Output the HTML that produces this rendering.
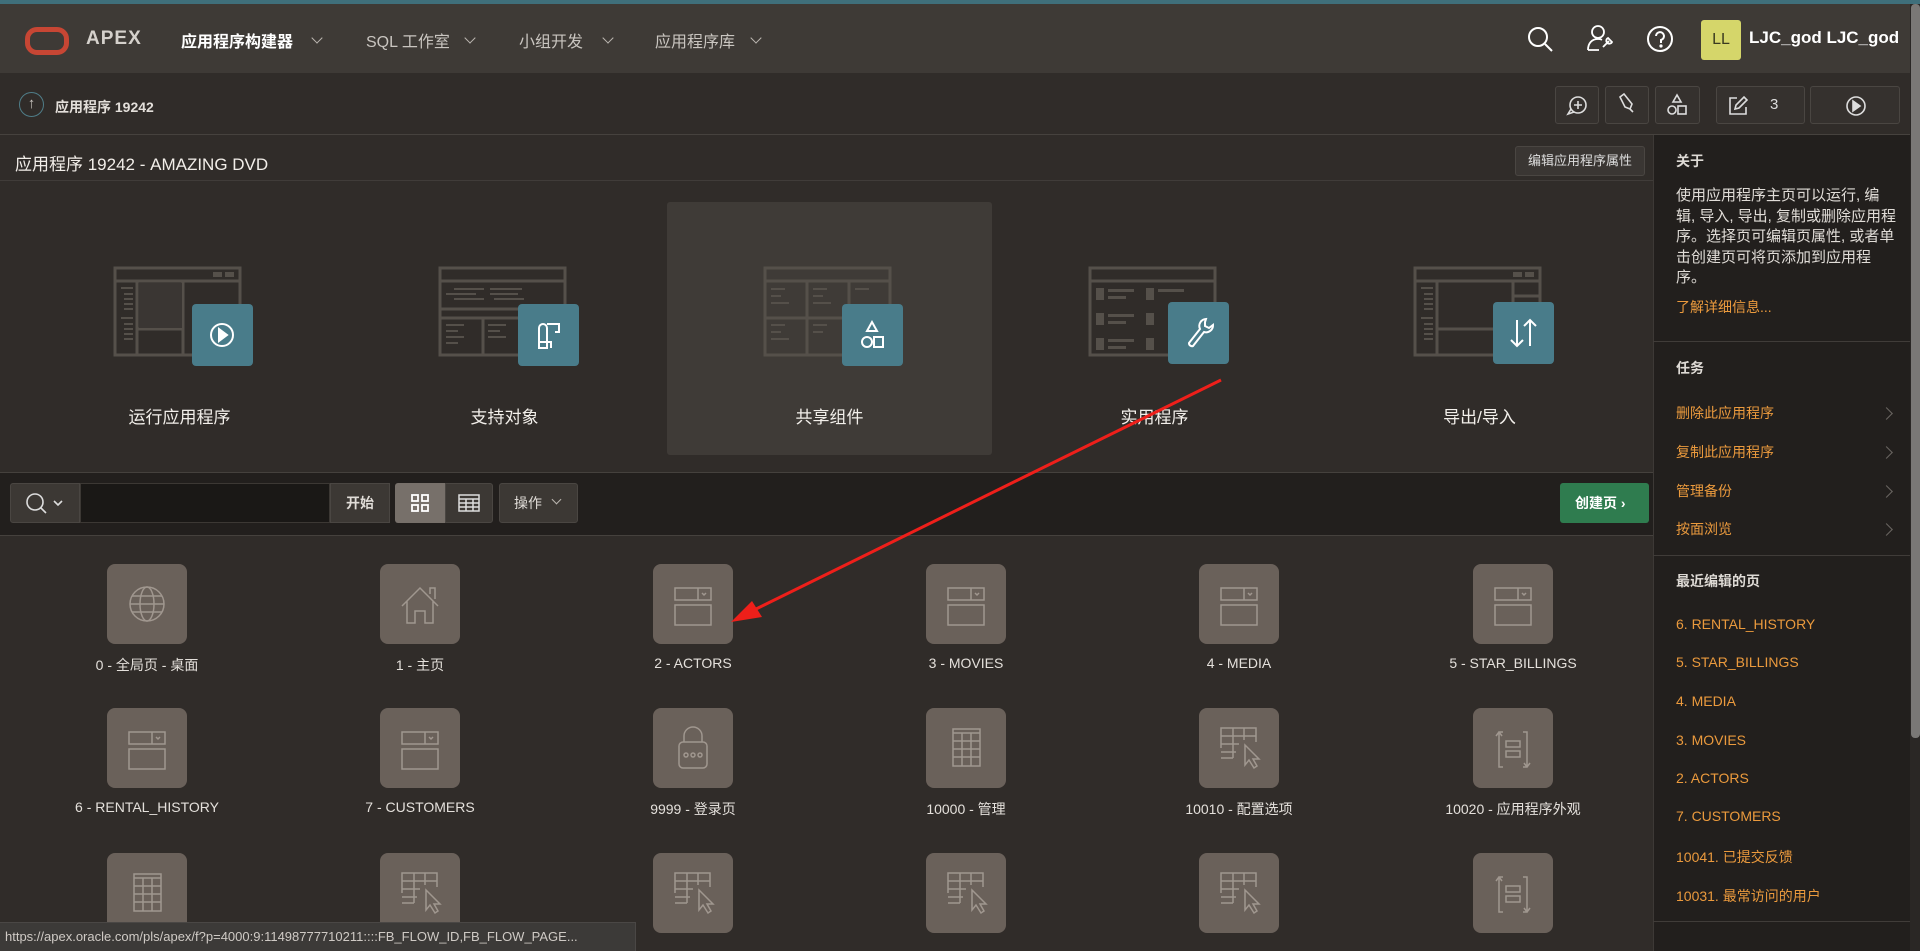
<!DOCTYPE html>
<html><head><meta charset="utf-8">
<style>
*{margin:0;padding:0;box-sizing:border-box}
body{width:1920px;height:951px;overflow:hidden;background:#302c29;font-family:"Liberation Sans","Noto Sans CJK SC",sans-serif;color:#e6e3df;position:relative}
.a{position:absolute}
.nav{font-size:16px;color:#c9c5c0;top:28px}
.chev{position:absolute;width:8px;height:8px;border-right:1.5px solid #bbb6b0;border-bottom:1.5px solid #bbb6b0;transform:rotate(45deg)}
.tb{position:absolute;top:86px;height:38px;border:1px solid #4a4642;border-radius:3px;background:#35312e}
.card{position:absolute;top:202px;width:325px;height:253px}
.card .lbl{position:absolute;top:201px;left:0;width:100%;text-align:center;font-size:17px;color:#f2efea}
.mock{position:absolute;left:-67px;top:64px}
.badge{position:absolute;left:12px;top:102px;width:61px;height:62px;background:#497c8a;border-radius:4px}
.tile{position:absolute;width:80px;height:80px;background:#6a615a;border-radius:8px}
.tl{position:absolute;width:260px;text-align:center;font-size:14px;color:#e4e0db}
.rp{position:absolute;left:1676px;font-size:14px}
.or{color:#eb9a3d}
.h{font-weight:bold;color:#dedad5;font-size:14px}
.rc{position:absolute;left:1882px;width:9px;height:9px;border-right:1.5px solid #6b6662;border-top:1.5px solid #6b6662;transform:rotate(45deg)}
</style></head><body>
<div class="a" style="left:0;top:0;width:1920px;height:4px;background:#3f6f7b"></div>
<div class="a" style="left:0;top:4px;width:1910px;height:69px;background:#3e3a36"></div>
<div class="a" style="left:25px;top:27px;width:44px;height:28px;border:5px solid #c74634;border-radius:12px"></div>
<div class="a" style="left:86px;top:28px;font-size:19px;font-weight:bold;color:#d5d1cc;letter-spacing:1px">APEX</div>
<div class="a nav" style="left:181px;color:#fff;font-weight:bold">应用程序构建器</div><div class="chev" style="left:313px;top:34px"></div>
<div class="a nav" style="left:366px">SQL 工作室</div><div class="chev" style="left:466px;top:34px"></div>
<div class="a nav" style="left:519px">小组开发</div><div class="chev" style="left:604px;top:34px"></div>
<div class="a nav" style="left:655px">应用程序库</div><div class="chev" style="left:752px;top:34px"></div>
<svg class="a" style="left:1526px;top:25px" width="30" height="30" viewBox="0 0 30 30" fill="none" stroke="#fff" stroke-width="2"><circle cx="12" cy="12" r="9"/><path d="M19 19l7 7"/></svg>
<svg class="a" style="left:1586px;top:23px" width="30" height="32" viewBox="0 0 30 32" fill="none" stroke="#fff" stroke-width="1.8"><circle cx="12" cy="9" r="6"/><path d="M2 27c0-7 4-11 10-11c2 0 3 .3 4 .8M2 27h11"/><path d="M17 24l6-6M22 15a3 3 0 1 0 4 4l-2-2z"/></svg>
<svg class="a" style="left:1646px;top:25px" width="28" height="28" viewBox="0 0 28 28" fill="none" stroke="#fff" stroke-width="2"><circle cx="14" cy="14" r="12"/><path d="M10 11a4 4 0 1 1 5 4v3"/><circle cx="15" cy="21" r=".6" fill="#fff"/></svg>
<div class="a" style="left:1701px;top:20px;width:40px;height:40px;background:#d5d66a;border-radius:3px;color:#3a3a20;font-size:16px;text-align:center;line-height:40px">LL</div>
<div class="a" style="left:1749px;top:28px;font-size:17px;font-weight:bold;color:#fff">LJC_god LJC_god</div>
<div class="a" style="left:1910px;top:4px;width:10px;height:947px;background:#2a2725"></div>
<div class="a" style="left:1911px;top:4px;width:9px;height:734px;background:#7a7876;border-radius:4px"></div>
<div class="a" style="left:0;top:73px;width:1910px;height:62px;background:#302c29;border-bottom:1px solid #46423e"></div>
<div class="a" style="left:19px;top:92px;width:25px;height:25px;border:1.5px solid #4f7d88;border-radius:50%;color:#c8c4bf;font-size:15px;text-align:center;line-height:21px">↑</div>
<div class="a" style="left:55px;top:97px;font-size:14px;font-weight:bold;color:#e3dfda">应用程序 19242</div>
<div class="tb" style="left:1555px;width:44px"><svg width="42" height="36" viewBox="0 0 42 36" fill="none" stroke="#ddd" stroke-width="1.6"><circle cx="22" cy="18" r="8"/><path d="M15 22l-3 5 6-2M22 14v8M18 18h8"/></svg></div>
<div class="tb" style="left:1605px;width:44px"><svg width="42" height="36" viewBox="0 0 42 36" fill="none" stroke="#ddd" stroke-width="1.6"><path d="M14 10l4-3 8 10-2 5-5-2z"/><path d="M24 22l3 3"/></svg></div>
<div class="tb" style="left:1655px;width:45px"><svg width="43" height="36" viewBox="0 0 43 36" fill="none" stroke="#ddd" stroke-width="1.6"><path d="M21 8l-4 7h8z"/><circle cx="16" cy="23" r="4"/><rect x="22" y="19" width="8" height="8"/></svg></div>
<div class="tb" style="left:1716px;width:89px"><svg class="a" style="left:10px;top:8px" width="22" height="22" viewBox="0 0 22 22" fill="none" stroke="#ddd" stroke-width="1.6"><path d="M10 3H3v16h16v-7"/><path d="M8 14l1-4 8-8 3 3-8 8z"/></svg><span class="a" style="left:53px;top:9px;font-size:15px;color:#ddd">3</span></div>
<div class="tb" style="left:1810px;width:90px"><svg class="a" style="left:34px;top:8px" width="22" height="22" viewBox="0 0 22 22" fill="none" stroke="#ddd" stroke-width="1.6"><circle cx="11" cy="11" r="9"/><path d="M8 6l7 5-7 5z" fill="#ddd"/></svg></div>
<div class="a" style="left:1653px;top:135px;width:257px;height:816px;background:#221f1d;border-left:1px solid #3d3936"></div>
<div class="rp h" style="top:151px">关于</div>
<div class="rp" style="top:186px;width:240px;line-height:20.5px;color:#e0dcd7;font-size:15px;white-space:nowrap">使用应用程序主页可以运行, 编<br>辑, 导入, 导出, 复制或删除应用程<br>序。选择页可编辑页属性, 或者单<br>击创建页可将页添加到应用程<br>序。</div>
<div class="rp or" style="top:297px">了解详细信息...</div>
<div class="a" style="left:1653px;top:341px;width:257px;height:1px;background:#403c39"></div>
<div class="rp h" style="top:358px">任务</div>
<div class="rp or" style="top:403px">删除此应用程序</div><div class="rc" style="top:409px"></div>
<div class="rp or" style="top:442px">复制此应用程序</div><div class="rc" style="top:448px"></div>
<div class="rp or" style="top:481px">管理备份</div><div class="rc" style="top:487px"></div>
<div class="rp or" style="top:519px">按面浏览</div><div class="rc" style="top:525px"></div>
<div class="a" style="left:1653px;top:555px;width:257px;height:1px;background:#403c39"></div>
<div class="rp h" style="top:571px">最近编辑的页</div>
<div class="rp or" style="top:616px">6. RENTAL_HISTORY</div>
<div class="rp or" style="top:654px">5. STAR_BILLINGS</div>
<div class="rp or" style="top:693px">4. MEDIA</div>
<div class="rp or" style="top:732px">3. MOVIES</div>
<div class="rp or" style="top:770px">2. ACTORS</div>
<div class="rp or" style="top:808px">7. CUSTOMERS</div>
<div class="rp or" style="top:847px">10041. 已提交反馈</div>
<div class="rp or" style="top:886px">10031. 最常访问的用户</div>
<div class="a" style="left:1653px;top:921px;width:257px;height:1px;background:#403c39"></div>
<div class="a" style="left:15px;top:150px;font-size:17px;color:#f2eee9">应用程序 19242 - AMAZING DVD</div>
<div class="a" style="left:1515px;top:146px;width:130px;height:30px;border:1px solid #4a4642;border-radius:3px;background:#3a3633;font-size:13px;color:#ddd;text-align:center;line-height:28px">编辑应用程序属性</div>
<div class="a" style="left:0;top:180px;width:1653px;height:1px;background:#403c39"></div>
<div class="a" style="left:667px;top:202px;width:325px;height:253px;background:#3f3b37;border-radius:3px"></div>
<svg width="0" height="0" style="position:absolute"><defs>
<g id="mk" fill="none" stroke="#55504a" stroke-width="3"><rect x="2" y="2" width="125" height="87"/><path d="M2 15h125"/></g>
</defs></svg>
<div class="card" style="left:17px"><svg class="mock" style="left:96px" width="130" height="92"><use href="#mk"/><g fill="#55504a"><rect x="100" y="6" width="9" height="5"/><rect x="112" y="6" width="9" height="5"/></g><path d="M24 15v74M70 15v74M24 63h46" stroke="#55504a" stroke-width="3" fill="none"/><rect x="26" y="17" width="43" height="45" fill="#3a3633"/><g fill="#55504a"><rect x="8" y="21" width="12" height="2"/><rect x="11" y="27" width="9" height="2"/><rect x="11" y="32" width="9" height="2"/><rect x="11" y="37" width="9" height="2"/><rect x="11" y="42" width="9" height="2"/><rect x="8" y="51" width="12" height="2"/><rect x="11" y="57" width="9" height="2"/><rect x="11" y="62" width="9" height="2"/><rect x="11" y="67" width="9" height="2"/><rect x="11" y="72" width="9" height="2"/></g></svg>
<div class="badge" style="left:175px"><svg width="61" height="62" fill="none" stroke="#fff" stroke-width="2"><circle cx="30" cy="31" r="11"/><path d="M27 25l8 6-8 6z" fill="#fff"/></svg></div><div class="lbl">运行应用程序</div></div>
<div class="card" style="left:342px"><svg class="mock" style="left:96px" width="130" height="92"><use href="#mk"/><path d="M2 43h125M2 52h125M45 52v37" stroke="#55504a" stroke-width="3" fill="none"/><g fill="#55504a"><rect x="16" y="22" width="30" height="2"/><rect x="52" y="22" width="32" height="2"/><rect x="8" y="27" width="30" height="2"/><rect x="52" y="27" width="28" height="2"/><rect x="16" y="32" width="30" height="2"/><rect x="56" y="32" width="30" height="2"/><rect x="8" y="58" width="18" height="2"/><rect x="8" y="64" width="12" height="2"/><rect x="8" y="70" width="18" height="2"/><rect x="8" y="76" width="12" height="2"/><rect x="50" y="58" width="18" height="2"/><rect x="50" y="64" width="12" height="2"/><rect x="50" y="70" width="18" height="2"/></g></svg>
<div class="badge" style="left:176px"><svg width="61" height="62" fill="none" stroke="#fff" stroke-width="2"><path d="M21 38v-14a4 4 0 0 1 8 0v20h-8v-6h12v6M29 20h12v8h-4"/></svg></div><div class="lbl">支持对象</div></div>
<div class="card" style="left:667px"><svg class="mock" style="left:96px" width="130" height="92"><use href="#mk"/><path d="M2 52h125M44 15v74M86 15v74" stroke="#55504a" stroke-width="3" fill="none"/><g fill="#55504a"><rect x="8" y="22" width="14" height="2"/><rect x="8" y="29" width="10" height="2"/><rect x="8" y="36" width="18" height="2"/><rect x="50" y="22" width="14" height="2"/><rect x="50" y="29" width="10" height="2"/><rect x="50" y="36" width="18" height="2"/><rect x="8" y="58" width="14" height="2"/><rect x="8" y="65" width="10" height="2"/><rect x="8" y="72" width="18" height="2"/><rect x="50" y="58" width="14" height="2"/><rect x="50" y="65" width="10" height="2"/><rect x="92" y="22" width="14" height="2"/></g></svg>
<div class="badge" style="left:175px"><svg width="61" height="62" fill="none" stroke="#fff" stroke-width="2"><path d="M30 18l-5 9h10z"/><circle cx="25" cy="38" r="5"/><rect x="32" y="33" width="9" height="10"/></svg></div><div class="lbl">共享组件</div></div>
<div class="card" style="left:992px"><svg class="mock" style="left:96px" width="130" height="92"><use href="#mk"/><g fill="#55504a"><rect x="8" y="22" width="8" height="12"/><rect x="20" y="23" width="26" height="3"/><rect x="20" y="30" width="18" height="3"/><rect x="58" y="22" width="8" height="12"/><rect x="70" y="23" width="26" height="3"/><rect x="8" y="47" width="8" height="12"/><rect x="20" y="48" width="26" height="3"/><rect x="20" y="55" width="18" height="3"/><rect x="58" y="47" width="8" height="12"/><rect x="8" y="72" width="8" height="12"/><rect x="20" y="73" width="26" height="3"/><rect x="20" y="80" width="18" height="3"/><rect x="58" y="72" width="8" height="12"/></g></svg>
<div class="badge" style="left:176px;top:100px"><svg width="61" height="62" fill="none" stroke="#fff" stroke-width="2"><path d="M38 17a7 7 0 0 0-6 10l-11 14a3 3 0 0 0 4 3l11-14a7 7 0 0 0 9-7l-4 3-4-2v-4z"/></svg></div><div class="lbl">实用程序</div></div>
<div class="card" style="left:1317px"><svg class="mock" style="left:96px" width="130" height="92"><use href="#mk"/><g fill="#55504a"><rect x="100" y="6" width="9" height="5"/><rect x="112" y="6" width="9" height="5"/></g><path d="M24 15v74M24 63h103M100 15v48M100 30h27" stroke="#55504a" stroke-width="3" fill="none"/><g fill="#55504a"><rect x="8" y="21" width="12" height="2"/><rect x="11" y="27" width="9" height="2"/><rect x="11" y="32" width="9" height="2"/><rect x="11" y="37" width="9" height="2"/><rect x="11" y="42" width="9" height="2"/><rect x="8" y="51" width="12" height="2"/><rect x="11" y="57" width="9" height="2"/><rect x="11" y="62" width="9" height="2"/><rect x="11" y="67" width="9" height="2"/><rect x="11" y="72" width="9" height="2"/></g></svg>
<div class="badge" style="left:176px;top:100px"><svg width="61" height="62" fill="none" stroke="#fff" stroke-width="2"><path d="M24 18v26M18 38l6 6 6-6M37 44V18M31 24l6-6 6 6"/></svg></div><div class="lbl">导出/导入</div></div>
<div class="a" style="left:0;top:472px;width:1653px;height:1px;background:#45413d"></div>
<div class="a" style="left:0;top:473px;width:1653px;height:62px;background:#221f1d"></div>
<div class="a" style="left:10px;top:483px;width:70px;height:40px;background:#3c3834;border:1px solid #4a4642;border-radius:3px 0 0 3px"><svg width="68" height="38" fill="none" stroke="#ddd" stroke-width="1.6"><circle cx="24" cy="18" r="8"/><path d="M30 24l5 5M43 17l4 4 4-4"/></svg></div>
<div class="a" style="left:80px;top:483px;width:250px;height:40px;background:#1a1816;border:1px solid #3c3834"></div>
<div class="a" style="left:330px;top:483px;width:60px;height:40px;background:#3c3834;border:1px solid #4a4642;font-size:14px;font-weight:bold;color:#e0dcd7;text-align:center;line-height:38px">开始</div>
<div class="a" style="left:395px;top:483px;width:50px;height:40px;background:#77706a;border-radius:3px 0 0 3px"><svg width="50" height="40" fill="none" stroke="#fff" stroke-width="1.8"><rect x="17" y="12" width="6" height="6"/><rect x="27" y="12" width="6" height="6"/><rect x="17" y="22" width="6" height="6"/><rect x="27" y="22" width="6" height="6"/></svg></div>
<div class="a" style="left:445px;top:483px;width:48px;height:40px;background:#3c3834;border:1px solid #4a4642;border-radius:0 3px 3px 0"><svg width="46" height="38" fill="none" stroke="#ddd" stroke-width="1.5"><rect x="13" y="11" width="20" height="16"/><path d="M13 15h20M13 19h20M13 23h20M20 15v12M27 15v12"/></svg></div>
<div class="a" style="left:499px;top:483px;width:79px;height:40px;background:#3c3834;border:1px solid #4a4642;border-radius:3px;font-size:14px;color:#e0dcd7;line-height:38px;padding-left:14px">操作</div><div class="chev" style="left:553px;top:496px;width:7px;height:7px"></div>
<div class="a" style="left:1560px;top:483px;width:89px;height:40px;background:#2f7c4f;border-radius:3px;font-size:14px;font-weight:bold;color:#fff;line-height:40px;padding-left:15px">创建页 ›</div>
<div class="a" style="left:0;top:535px;width:1653px;height:1px;background:#45413d"></div>
<svg width="0" height="0" style="position:absolute"><defs>
<g id="form" fill="none" stroke="#a0978f" stroke-width="1.5"><rect x="22" y="24" width="36" height="12"/><path d="M45 24v12M49 29l2 2 2-2"/><rect x="22" y="41" width="36" height="20"/></g>
<g id="grid" fill="none" stroke="#a0978f" stroke-width="1.5"><rect x="27" y="21" width="27" height="37"/><path d="M27 25h27M27 33h27M27 41h27M27 49h27M36 25v33M45 25v33"/></g>
<g id="gridc" fill="none" stroke="#a0978f" stroke-width="1.5"><path d="M22 40V20h35v14M22 28h35M22 36h18M22 44h15M22 50h12M34 20v30M45 20v12M46 37v20l4-5 5 8 3-2-4-7h6z"/></g>
<g id="swap" fill="none" stroke="#a0978f" stroke-width="1.5"><path d="M30 24h-4v35h4M26 24l-3 4M26 24l3 4M50 24h4v35h-4M54 59l-3-4M54 59l3-4"/><rect x="33" y="33" width="14" height="6"/><rect x="33" y="43" width="14" height="6"/></g>
</defs></svg>
<div class="tile" style="left:107px;top:564px"><svg width="80" height="80" fill="none" stroke="#a0978f" stroke-width="1.5"><circle cx="40" cy="40" r="17"/><ellipse cx="40" cy="40" rx="7" ry="17"/><path d="M23 40h34M25 32h30M25 48h30"/></svg></div>
<div class="tile" style="left:380px;top:564px"><svg width="80" height="80" fill="none" stroke="#a0978f" stroke-width="1.5"><path d="M22 42l18-18 18 18M27 37v22h8V47h10v12h8V37M50 30v-6h5v11"/></svg></div>
<div class="tile" style="left:653px;top:564px"><svg width="80" height="80"><use href="#form"/></svg></div>
<div class="tile" style="left:926px;top:564px"><svg width="80" height="80"><use href="#form"/></svg></div>
<div class="tile" style="left:1199px;top:564px"><svg width="80" height="80"><use href="#form"/></svg></div>
<div class="tile" style="left:1473px;top:564px"><svg width="80" height="80"><use href="#form"/></svg></div>
<div class="tl" style="left:17px;top:655px">0 - 全局页 - 桌面</div>
<div class="tl" style="left:290px;top:655px">1 - 主页</div>
<div class="tl" style="left:563px;top:655px">2 - ACTORS</div>
<div class="tl" style="left:836px;top:655px">3 - MOVIES</div>
<div class="tl" style="left:1109px;top:655px">4 - MEDIA</div>
<div class="tl" style="left:1383px;top:655px">5 - STAR_BILLINGS</div>
<div class="tile" style="left:107px;top:708px"><svg width="80" height="80"><use href="#form"/></svg></div>
<div class="tile" style="left:380px;top:708px"><svg width="80" height="80"><use href="#form"/></svg></div>
<div class="tile" style="left:653px;top:708px"><svg width="80" height="80" fill="none" stroke="#a0978f" stroke-width="1.5"><rect x="26" y="34" width="28" height="26" rx="4"/><path d="M31 34v-6a9 9 0 0 1 18 0v6"/><circle cx="33" cy="47" r="2"/><circle cx="40" cy="47" r="2"/><circle cx="47" cy="47" r="2"/></svg></div>
<div class="tile" style="left:926px;top:708px"><svg width="80" height="80"><use href="#grid"/></svg></div>
<div class="tile" style="left:1199px;top:708px"><svg width="80" height="80"><use href="#gridc"/></svg></div>
<div class="tile" style="left:1473px;top:708px"><svg width="80" height="80"><use href="#swap"/></svg></div>
<div class="tl" style="left:17px;top:799px">6 - RENTAL_HISTORY</div>
<div class="tl" style="left:290px;top:799px">7 - CUSTOMERS</div>
<div class="tl" style="left:563px;top:799px">9999 - 登录页</div>
<div class="tl" style="left:836px;top:799px">10000 - 管理</div>
<div class="tl" style="left:1109px;top:799px">10010 - 配置选项</div>
<div class="tl" style="left:1383px;top:799px">10020 - 应用程序外观</div>
<div class="tile" style="left:107px;top:853px"><svg width="80" height="80"><use href="#grid"/></svg></div>
<div class="tile" style="left:380px;top:853px"><svg width="80" height="80"><use href="#gridc"/></svg></div>
<div class="tile" style="left:653px;top:853px"><svg width="80" height="80"><use href="#gridc"/></svg></div>
<div class="tile" style="left:926px;top:853px"><svg width="80" height="80"><use href="#gridc"/></svg></div>
<div class="tile" style="left:1199px;top:853px"><svg width="80" height="80"><use href="#gridc"/></svg></div>
<div class="tile" style="left:1473px;top:853px"><svg width="80" height="80"><use href="#swap"/></svg></div>
<div class="a" style="left:0;top:922px;width:636px;height:29px;background:#3c3a38;border-top:1px solid #4a4745;border-right:1px solid #4a4745;font-size:13px;color:#cfcac5;line-height:28px;padding-left:5px;white-space:nowrap;overflow:hidden">https://apex.oracle.com/pls/apex/f?p=4000:9:11498777710211::::FB_FLOW_ID,FB_FLOW_PAGE...</div>
<svg class="a" style="left:0;top:0" width="1920" height="951"><line x1="1221" y1="380" x2="750" y2="612" stroke="#ee1f1a" stroke-width="3"/><path d="M731 622L752 601L762 617z" fill="#ee1f1a"/></svg>
</body></html>
